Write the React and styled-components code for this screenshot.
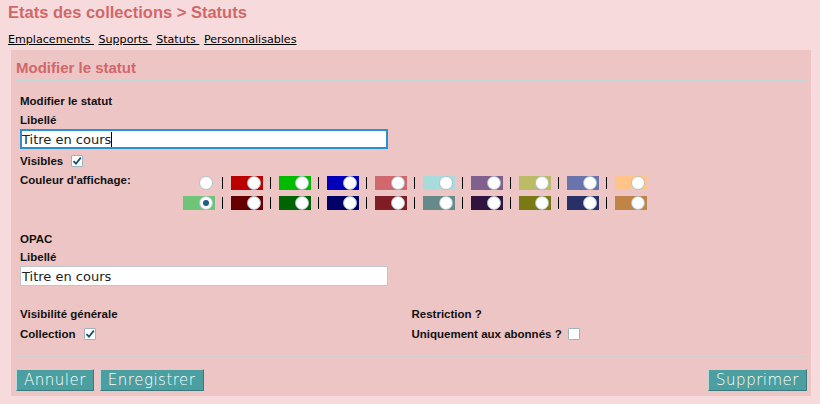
import React from 'react';
import styled, { createGlobalStyle } from 'styled-components';

const tabs = ["Emplacements", "Supports", "Statuts", "Personnalisables"];

const colorRows = [
    [null, "#bb0000", "#00bb00", "#0000bb", "#d0686e", "#a8dcdc", "#80608f", "#bcbc66", "#6a74ac", "#ffc488"],
    ["#70c478", "#660000", "#006400", "#000066", "#801c24", "#668a8a", "#301440", "#7a7a14", "#283068", "#c08446"],
];

const GlobalStyle = createGlobalStyle`
    html, body {
        margin: 0;
        padding: 0;
        background: #f7dbdc;
    }
    body {
        font-family: "Liberation Sans", Arial, sans-serif;
    }
`;

const Page = styled.div`
    width: 820px;
    height: 404px;
    box-sizing: border-box;
    padding: 2px 9px 0 8px;
    overflow: hidden;
`;

const Title = styled.h1`
    margin: 0;
    font-size: 16.5px;
    line-height: 20px;
    font-weight: bold;
    color: #d0686a;
`;

const TabBar = styled.div`
    margin-top: 11px;
    font-family: "DejaVu Sans", sans-serif;
    font-size: 11.1px;
    line-height: 14px;
    white-space: pre;
`;

const Tab = styled.a`
    color: #000;
    text-decoration: underline;
    margin-right: 4.5px;
`;

const Panel = styled.div`
    margin: 3px 0 0 3px;
    width: 800px;
    box-sizing: border-box;
    background: #eec5c5;
    padding: 0 4px 5px 5px;
`;

const PanelTitle = styled.h3`
    margin: 0;
    padding: 9px 0 3px;
    border-bottom: 1px solid #c3d5d5;
    font-size: 15px;
    line-height: 18px;
    font-weight: bold;
    color: #d0686a;
`;

const Body = styled.div`
    padding: 11px 4px 0;
`;

const Label = styled.div`
    font-size: 11.5px;
    line-height: 18px;
    font-weight: bold;
    color: #111;
    margin-top: ${p => p.$top || 0}px;
`;

const CheckRow = styled.div`
    display: flex;
    align-items: center;
    gap: ${p => p.$gap || 8}px;
    height: 18px;
    margin-top: ${p => p.$top || 0}px;
    font-size: 11.5px;
    font-weight: bold;
    color: #111;
`;

const TextBox = styled.div`
    width: 368px;
    height: 20px;
    box-sizing: border-box;
    background: #fff;
    border: ${p => p.$focused ? "2px solid #2b8fd4" : "1px solid #bcc6cc"};
    padding-left: ${p => p.$focused ? 0 : 1}px;
    display: flex;
    align-items: center;
    font-family: "DejaVu Sans", sans-serif;
    font-size: 13px;
    color: #222;
    white-space: pre;
`;

const Caret = styled.span`
    display: inline-block;
    width: 1px;
    height: 15px;
    background: #000;
`;

const Box = styled.span`
    width: 12px;
    height: 12px;
    box-sizing: border-box;
    border: 1px solid #9fb2c0;
    border-radius: 1px;
    background: #fff;
    display: inline-flex;
    align-items: center;
    justify-content: center;
`;

const ColorSection = styled.div`
    display: flex;
    margin-top: 3px;
`;

const ColorLabel = styled.div`
    width: 163px;
    font-size: 11.5px;
    line-height: 14px;
    font-weight: bold;
    color: #111;
`;

const ColorGrid = styled.div`
    padding-top: 3px;
    display: flex;
    flex-direction: column;
    gap: 6px;
`;

const ColorRow = styled.div`
    display: flex;
    align-items: center;
    height: 14px;
`;

const Swatch = styled.label`
    width: 32px;
    height: 14px;
    box-sizing: border-box;
    padding-right: 2px;
    background: ${p => p.$color || "transparent"};
    display: flex;
    justify-content: flex-end;
    align-items: center;
`;

const Radio = styled.span`
    width: 14px;
    height: 14px;
    box-sizing: border-box;
    border-radius: 50%;
    border: 1.5px solid #b4c4cc;
    background: radial-gradient(circle at 50% 40%, #ffffff 55%, #eef3f6 100%);
    display: flex;
    align-items: center;
    justify-content: center;
    &::after {
        content: "";
        display: ${p => p.$checked ? "block" : "none"};
        width: 6px;
        height: 6px;
        border-radius: 50%;
        background: #1c5f86;
    }
`;

const Sep = styled.span`
    width: 1px;
    height: 12px;
    background: #000;
    margin: 0 8px 0 7px;
`;

const TwoCol = styled.div`
    display: grid;
    grid-template-columns: 1fr 1fr;
    margin-top: 19px;
`;

const Footer = styled.div`
    margin-top: 13px;
    border-top: 1px solid #d3cccc;
    padding-top: 12px;
    display: flex;
    justify-content: space-between;
`;

const ButtonGroup = styled.div`
    display: flex;
    gap: 6px;
`;

const Button = styled.button`
    height: 22px;
    box-sizing: border-box;
    padding: 1px 7px;
    border: 1px solid;
    border-color: #b9d9da #3b7a7c #3b7a7c #b9d9da;
    background: #4c9fa1;
    color: #fff;
    font-family: "DejaVu Sans", sans-serif;
    font-size: 15px;
    font-weight: 200;
    letter-spacing: 0.5px;
    line-height: 18px;
    cursor: pointer;
`;

function Checkbox({ checked }) {
    return (
        <Box>
            {checked ?
                <svg width="10" height="10" viewBox="0 0 10 10">
                    <path d="M1.5 5.2 L4 7.7 L8.8 1.6" fill="none" stroke="#154e6e" strokeWidth="1.8" />
                </svg> : null}
        </Box>
    );
}

export default function App() {
    return (
        <Page>
            <GlobalStyle />
            <Title>Etats des collections &gt; Statuts</Title>
            <TabBar>
                {tabs.map((t, i) => <Tab key={i} href="#">{i < tabs.length - 1 ? t + " " : t}</Tab>)}
            </TabBar>
            <Panel>
                <PanelTitle>Modifier le statut</PanelTitle>
                <Body>
                    <Label>Modifier le statut</Label>
                    <Label $top={1}>Libellé</Label>
                    <TextBox $focused>Titre en cours<Caret /></TextBox>
                    <CheckRow $top={3}>Visibles <Checkbox checked /></CheckRow>
                    <ColorSection>
                        <ColorLabel>Couleur d'affichage:</ColorLabel>
                        <ColorGrid>
                            {colorRows.map((row, r) => (
                                <ColorRow key={r}>
                                    {row.map((c, i) => (
                                        <React.Fragment key={i}>
                                            <Swatch $color={c}><Radio $checked={r === 1 && i === 0} /></Swatch>
                                            {i < row.length - 1 ? <Sep /> : null}
                                        </React.Fragment>
                                    ))}
                                </ColorRow>
                            ))}
                        </ColorGrid>
                    </ColorSection>
                    <Label $top={20}>OPAC</Label>
                    <Label>Libellé</Label>
                    <TextBox>Titre en cours</TextBox>
                    <TwoCol>
                        <div>
                            <Label>Visibilité générale</Label>
                            <CheckRow $top={2}>Collection <Checkbox checked /></CheckRow>
                        </div>
                        <div>
                            <Label>Restriction ?</Label>
                            <CheckRow $top={2} $gap={6}>Uniquement aux abonnés ? <Checkbox /></CheckRow>
                        </div>
                    </TwoCol>
                </Body>
                <Footer>
                    <ButtonGroup>
                        <Button>Annuler</Button>
                        <Button>Enregistrer</Button>
                    </ButtonGroup>
                    <Button>Supprimer</Button>
                </Footer>
            </Panel>
        </Page>
    );
}
